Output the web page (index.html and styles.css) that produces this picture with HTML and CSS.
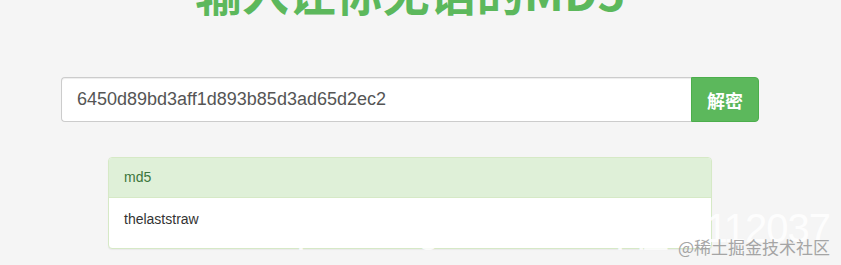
FILE: index.html
```html
<!DOCTYPE html>
<html>
<head>
<meta charset="utf-8">
<link rel="stylesheet" href="styles.css">
</head>
<body>
<div class="page">
  <h1 class="title">输入让你无语的MD5</h1>
  <div class="search">
    <div class="field">6450d89bd3aff1d893b85d3ad65d2ec2</div>
    <button class="btn">解密</button>
  </div>
  <div class="panel">
    <div class="panel-heading">md5</div>
    <div class="panel-body">thelaststraw</div>
  </div>
  <div class="wm-url">https://blog.csdn.net/qq_41112037</div>
  <div class="wm-brand">@稀土掘金技术社区</div>
</div>
</body>
</html>
```
FILE: styles.css
```css
html, body {
  margin: 0;
  padding: 0;
  background: #f5f5f5;
  overflow: hidden;
}
.page {
  position: relative;
  width: 820px;
  height: 265px;
  display: flex;
  flex-direction: column;
  align-items: center;
  font-family: "Liberation Sans", Arial, sans-serif;
}
.title {
  margin: -33px 0 0 0;
  font-family: "Noto Sans CJK SC", sans-serif;
  font-size: 47px;
  line-height: 1;
  font-weight: 700;
  color: #5cb85c;
  white-space: nowrap;
}
.search {
  margin-top: 63px;
  width: 698px;
  display: flex;
}
.field {
  flex: 1;
  height: 45px;
  box-sizing: border-box;
  padding: 10px 15px;
  font-size: 18px;
  line-height: 23px;
  color: #555;
  background: #fff;
  border: 1px solid #ccc;
  border-right: 0;
  border-radius: 4px 0 0 4px;
  box-shadow: inset 0 1px 1px rgba(0,0,0,.075);
}
.btn {
  width: 68px;
  height: 45px;
  border: 1px solid #4cae4c;
  border-radius: 0 4px 4px 0;
  background: #5cb85c;
  color: #fff;
  font-family: "Noto Sans CJK SC", sans-serif;
  font-weight: 700;
  font-size: 18px;
  padding: 0;
}
.panel {
  margin-top: 35px;
  width: 602px;
  border: 1px solid #d6e9c6;
  border-radius: 4px;
  background: #fff;
  box-shadow: 0 1px 1px rgba(0,0,0,.05);
}
.panel-heading {
  padding: 9px 15px 10px;
  font-size: 14px;
  line-height: 20px;
  color: #3c763d;
  background: #dff0d8;
  border-bottom: 1px solid #d6e9c6;
  border-radius: 3px 3px 0 0;
}
.panel-body {
  padding: 11px 15px 19px;
  font-size: 14px;
  line-height: 20px;
  color: #333;
}
.wm-url {
  position: absolute;
  right: -10px;
  top: 206px;
  font-family: "Liberation Sans", sans-serif;
  font-size: 40px;
  font-weight: 300;
  color: rgba(255,255,255,0.85);
  white-space: nowrap;
  letter-spacing: -1px;
}
.wm-brand {
  position: absolute;
  left: 678px;
  top: 236px;
  font-family: "Noto Sans CJK SC", sans-serif;
  font-size: 17px;
  line-height: 22px;
  color: #a5a5a5;
  white-space: nowrap;
}
```
